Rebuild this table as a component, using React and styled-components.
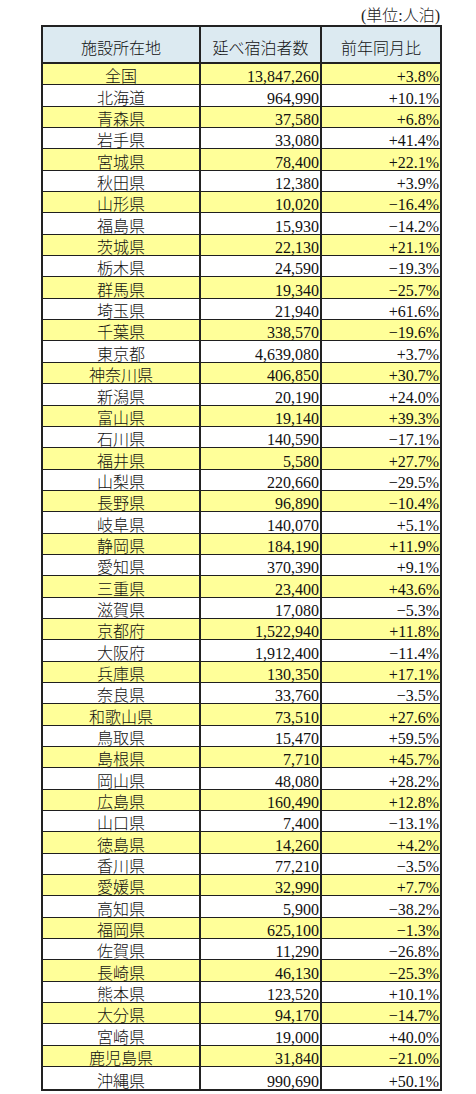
import React from 'react'
import styled, { createGlobalStyle } from 'styled-components';

const GlobalStyle = createGlobalStyle`
  html, body {
    margin: 0;
    padding: 0;
    background: #ffffff;
  }
  body {
    font-family: "Liberation Serif", "Noto Sans CJK JP", serif;
    color: #111111;
  }
`;

const rows = [
  ['全国', '13,847,260', '+3.8%'],
  ['北海道', '964,990', '+10.1%'],
  ['青森県', '37,580', '+6.8%'],
  ['岩手県', '33,080', '+41.4%'],
  ['宮城県', '78,400', '+22.1%'],
  ['秋田県', '12,380', '+3.9%'],
  ['山形県', '10,020', '−16.4%'],
  ['福島県', '15,930', '−14.2%'],
  ['茨城県', '22,130', '+21.1%'],
  ['栃木県', '24,590', '−19.3%'],
  ['群馬県', '19,340', '−25.7%'],
  ['埼玉県', '21,940', '+61.6%'],
  ['千葉県', '338,570', '−19.6%'],
  ['東京都', '4,639,080', '+3.7%'],
  ['神奈川県', '406,850', '+30.7%'],
  ['新潟県', '20,190', '+24.0%'],
  ['富山県', '19,140', '+39.3%'],
  ['石川県', '140,590', '−17.1%'],
  ['福井県', '5,580', '+27.7%'],
  ['山梨県', '220,660', '−29.5%'],
  ['長野県', '96,890', '−10.4%'],
  ['岐阜県', '140,070', '+5.1%'],
  ['静岡県', '184,190', '+11.9%'],
  ['愛知県', '370,390', '+9.1%'],
  ['三重県', '23,400', '+43.6%'],
  ['滋賀県', '17,080', '−5.3%'],
  ['京都府', '1,522,940', '+11.8%'],
  ['大阪府', '1,912,400', '−11.4%'],
  ['兵庫県', '130,350', '+17.1%'],
  ['奈良県', '33,760', '−3.5%'],
  ['和歌山県', '73,510', '+27.6%'],
  ['鳥取県', '15,470', '+59.5%'],
  ['島根県', '7,710', '+45.7%'],
  ['岡山県', '48,080', '+28.2%'],
  ['広島県', '160,490', '+12.8%'],
  ['山口県', '7,400', '−13.1%'],
  ['徳島県', '14,260', '+4.2%'],
  ['香川県', '77,210', '−3.5%'],
  ['愛媛県', '32,990', '+7.7%'],
  ['高知県', '5,900', '−38.2%'],
  ['福岡県', '625,100', '−1.3%'],
  ['佐賀県', '11,290', '−26.8%'],
  ['長崎県', '46,130', '−25.3%'],
  ['熊本県', '123,520', '+10.1%'],
  ['大分県', '94,170', '−14.7%'],
  ['宮崎県', '19,000', '+40.0%'],
  ['鹿児島県', '31,840', '−21.0%'],
  ['沖縄県', '990,690', '+50.1%'],
];

export default function App() {
  return (
    <>
      <GlobalStyle />
      <Page>
        <Unit>(単位:人泊)</Unit>
        <Table>
          <HeadRow>
            <HeadCell>施設所在地</HeadCell>
            <HeadCell>延べ宿泊者数</HeadCell>
            <HeadCell>前年同月比</HeadCell>
          </HeadRow>
          {rows.map((r, i) => (
            <Row key={i} $yellow={i % 2 === 0} $last={i === rows.length - 1}>
              <NameCell>{r[0]}</NameCell>
              <NumCell>{r[1]}</NumCell>
              <NumCell>{r[2]}</NumCell>
            </Row>
          ))}
        </Table>
      </Page>
    </>
  )
}

const Page = styled.div`
  padding: 6px 0 0 41px;
  width: 401px;
`;

// unit note sits above the table's right edge
const Unit = styled.div`
  height: 19px;
  line-height: 19px;
  text-align: right;
  font-size: 16px;
  font-weight: 300;
  word-spacing: 0;
  padding-right: 2px;
  color: #1a1a1a;
  span {
    margin: 0 1px;
  }
`;

const Table = styled.div`
  box-sizing: border-box;
  width: 401px;
  border: 2px solid #222;
`;

const HeadRow = styled.div`
  display: grid;
  grid-template-columns: 158px 121px 1fr;
  height: 37px;
  box-sizing: border-box;
  background: #dceaf1;
  border-bottom: 2px solid #222;
`;

const HeadCell = styled.div`
  display: flex;
  align-items: center;
  justify-content: center;
  padding-top: 8px;
  box-sizing: border-box;
  font-size: 16px;
  font-weight: 300;
  line-height: 16px;
  border-right: 2px solid #222;
  &:last-child {
    border-right: none;
  }
`;

const Row = styled.div`
  display: grid;
  grid-template-columns: 158px 121px 1fr;
  height: 21.35px;
  box-sizing: border-box;
  background: ${p => (p.$yellow ? '#ffff99' : '#ffffff')};
  border-bottom: ${p => (p.$last ? 'none' : '1px solid #1f1f1f')};
`;

const Cell = styled.div`
  display: flex;
  align-items: flex-end;
  box-sizing: border-box;
  font-size: 16px;
  font-weight: 300;
  line-height: 15px;
  white-space: nowrap;
  border-right: 2px solid #222;
  &:last-child {
    border-right: none;
  }
`;

const NameCell = styled(Cell)`
  justify-content: center;
`;

const NumCell = styled(Cell)`
  justify-content: flex-end;
  padding-right: 1px;
`;
